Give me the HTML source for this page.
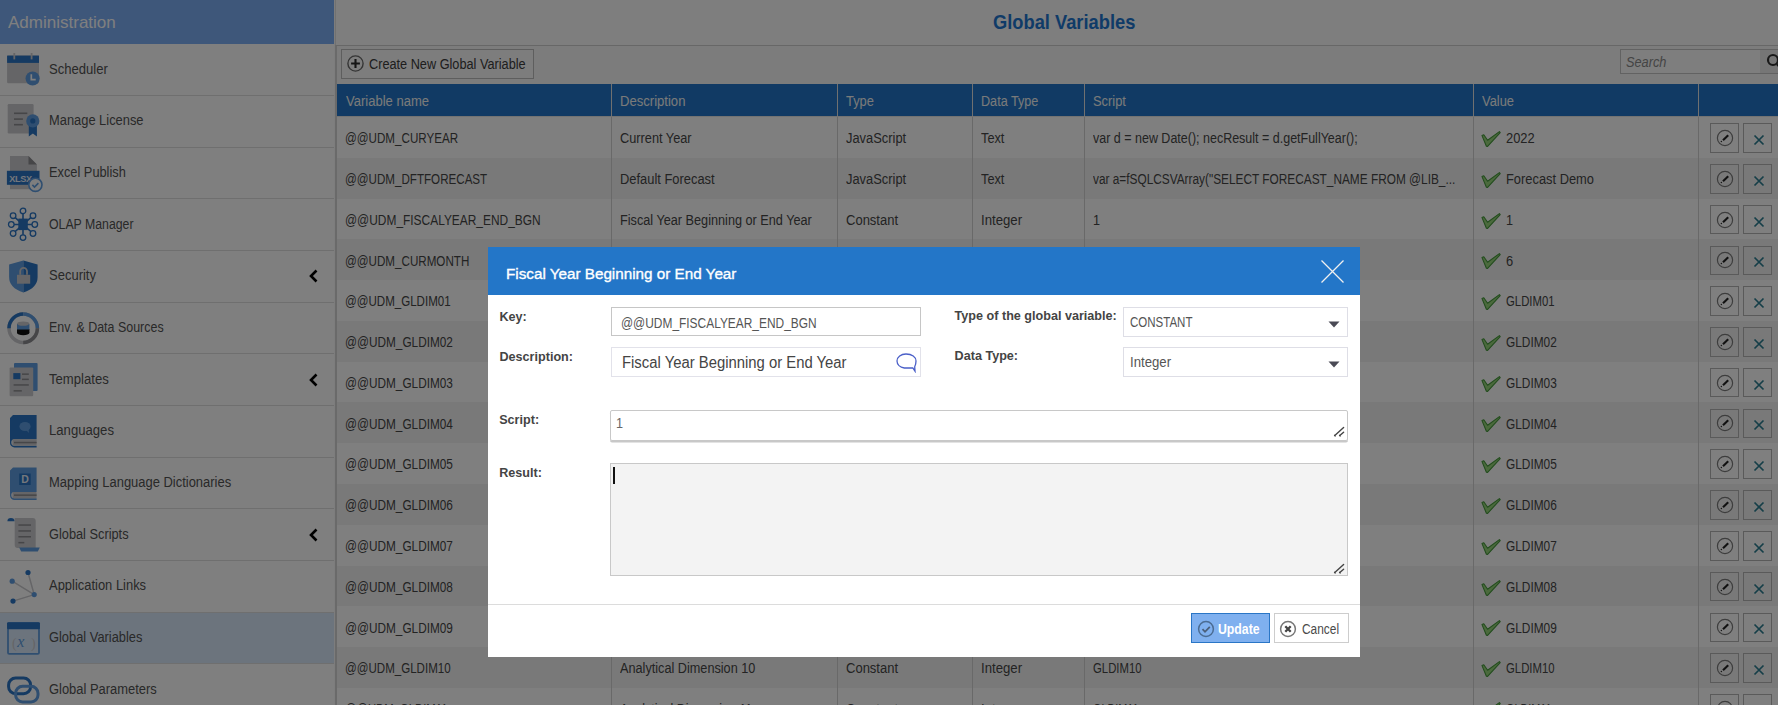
<!DOCTYPE html><html><head><meta charset="utf-8"><title>Global Variables</title><style>
*{box-sizing:border-box;margin:0;padding:0}
html,body{width:1778px;height:705px;overflow:hidden;background:#fafafa;font-family:"Liberation Sans",sans-serif;color:#333}
.abs{position:absolute}
.t{position:absolute;white-space:nowrap;line-height:1;transform-origin:0 0}
.c{transform:scaleX(0.89)}

</style></head><body>
<div class="abs" style="left:0;top:0;width:334px;height:705px;background:#ffffff"></div>
<div class="abs" style="left:0;top:0;width:334px;height:44px;background:#7caef4"></div>
<div class="t" style="left:7.50px;top:14.93px;font-size:16.60px;color:#fff;font-weight:normal;transform:scaleX(1.025);">Administration</div>
<div class="abs" style="left:0;top:44.40px;width:334px;height:51.67px;background:transparent;border-bottom:1px solid #dedede"></div>
<div class="t" style="left:49.00px;top:61.57px;font-size:14.00px;color:#525252;font-weight:normal;transform:scaleX(0.934);">Scheduler</div>
<div class="abs" style="left:0;top:96.07px;width:334px;height:51.67px;background:transparent;border-bottom:1px solid #dedede"></div>
<div class="t" style="left:49.00px;top:113.24px;font-size:14.00px;color:#525252;font-weight:normal;transform:scaleX(0.920);">Manage License</div>
<div class="abs" style="left:0;top:147.74px;width:334px;height:51.67px;background:transparent;border-bottom:1px solid #dedede"></div>
<div class="t" style="left:49.00px;top:164.91px;font-size:14.00px;color:#525252;font-weight:normal;transform:scaleX(0.914);">Excel Publish</div>
<div class="abs" style="left:0;top:199.41px;width:334px;height:51.67px;background:transparent;border-bottom:1px solid #dedede"></div>
<div class="t" style="left:49.00px;top:216.58px;font-size:14.00px;color:#525252;font-weight:normal;transform:scaleX(0.878);">OLAP Manager</div>
<div class="abs" style="left:0;top:251.08px;width:334px;height:51.67px;background:transparent;border-bottom:1px solid #dedede"></div>
<div class="t" style="left:49.00px;top:268.25px;font-size:14.00px;color:#525252;font-weight:normal;transform:scaleX(0.929);">Security</div>
<svg class="abs" style="left:308px;top:269.42px" width="11" height="14" viewBox="0 0 11 14"><path d="M8.5 1.5 L3 7 L8.5 12.5" fill="none" stroke="#000" stroke-width="2.6"/></svg>
<div class="abs" style="left:0;top:302.75px;width:334px;height:51.67px;background:transparent;border-bottom:1px solid #dedede"></div>
<div class="t" style="left:49.00px;top:319.92px;font-size:14.00px;color:#525252;font-weight:normal;transform:scaleX(0.889);">Env. &amp; Data Sources</div>
<div class="abs" style="left:0;top:354.42px;width:334px;height:51.67px;background:transparent;border-bottom:1px solid #dedede"></div>
<div class="t" style="left:49.00px;top:371.59px;font-size:14.00px;color:#525252;font-weight:normal;transform:scaleX(0.936);">Templates</div>
<svg class="abs" style="left:308px;top:372.75px" width="11" height="14" viewBox="0 0 11 14"><path d="M8.5 1.5 L3 7 L8.5 12.5" fill="none" stroke="#000" stroke-width="2.6"/></svg>
<div class="abs" style="left:0;top:406.09px;width:334px;height:51.67px;background:transparent;border-bottom:1px solid #dedede"></div>
<div class="t" style="left:49.00px;top:423.26px;font-size:14.00px;color:#525252;font-weight:normal;transform:scaleX(0.938);">Languages</div>
<div class="abs" style="left:0;top:457.76px;width:334px;height:51.67px;background:transparent;border-bottom:1px solid #dedede"></div>
<div class="t" style="left:49.00px;top:474.93px;font-size:14.00px;color:#525252;font-weight:normal;transform:scaleX(0.925);">Mapping Language Dictionaries</div>
<div class="abs" style="left:0;top:509.43px;width:334px;height:51.67px;background:transparent;border-bottom:1px solid #dedede"></div>
<div class="t" style="left:49.00px;top:526.60px;font-size:14.00px;color:#525252;font-weight:normal;transform:scaleX(0.913);">Global Scripts</div>
<svg class="abs" style="left:308px;top:527.76px" width="11" height="14" viewBox="0 0 11 14"><path d="M8.5 1.5 L3 7 L8.5 12.5" fill="none" stroke="#000" stroke-width="2.6"/></svg>
<div class="abs" style="left:0;top:561.10px;width:334px;height:51.67px;background:transparent;border-bottom:1px solid #dedede"></div>
<div class="t" style="left:49.00px;top:578.27px;font-size:14.00px;color:#525252;font-weight:normal;transform:scaleX(0.924);">Application Links</div>
<div class="abs" style="left:0;top:612.77px;width:334px;height:51.67px;background:#d9e9fb;border-bottom:1px solid #dedede"></div>
<div class="t" style="left:49.00px;top:629.94px;font-size:14.00px;color:#525252;font-weight:normal;transform:scaleX(0.919);">Global Variables</div>
<div class="abs" style="left:0;top:664.44px;width:334px;height:51.67px;background:transparent;border-bottom:1px solid #dedede"></div>
<div class="t" style="left:49.00px;top:681.61px;font-size:14.00px;color:#525252;font-weight:normal;transform:scaleX(0.923);">Global Parameters</div>
<svg class="abs" style="left:6px;top:53.40px;overflow:visible" width="36" height="36" viewBox="0 0 36 36"><rect x="1.1" y="2.6" width="31.9" height="27.6" rx="1.2" fill="#cacace"/><rect x="1.1" y="2.6" width="31.9" height="7.3" fill="#2a74c4"/><rect x="7.4" y="0" width="1.8" height="6.4" fill="#cacace"/><rect x="24.7" y="0" width="1.8" height="6.4" fill="#cacace"/><circle cx="26.6" cy="25.5" r="7.1" fill="#5f9de0"/><path d="M25.3 21.3v5.3h4.4" stroke="#fff" stroke-width="1.7" fill="none"/></svg>
<svg class="abs" style="left:6px;top:105.07px;overflow:visible" width="36" height="36" viewBox="0 0 36 36"><rect x="1.7" y="-1" width="25.9" height="29.5" rx="1.2" fill="#cacace"/><rect x="8" y="7.5" width="13.3" height="1.6" fill="#8c8c90"/><rect x="8" y="13.3" width="8.9" height="1.6" fill="#8c8c90"/><rect x="8" y="18.9" width="8.9" height="1.6" fill="#8c8c90"/><path d="M22.8 20v11.5l4.05-3 4.05 3V20z" fill="#2a74c4"/><circle cx="26.8" cy="15.9" r="6.6" fill="#5f9de0"/><circle cx="26.8" cy="15.9" r="2.6" fill="#2a74c4"/></svg>
<svg class="abs" style="left:6px;top:156.74px;overflow:visible" width="36" height="36" viewBox="0 0 36 36"><path d="M4 -1h18.5l8.4 8.4V32.3H4z" fill="#cacace"/><path d="M22.5 -1l8.4 8.4h-8.4z" fill="#8c8c90"/><rect x="0.9" y="13.8" width="32.6" height="14" fill="#2a74c4"/><text x="3.2" y="24.6" font-family="Liberation Sans" font-weight="bold" font-size="9.2" fill="#e8eef8" textLength="23">XLSX</text><circle cx="29.4" cy="27.8" r="6.6" fill="#fdfdfd" stroke="#5f9de0" stroke-width="1.6"/><path d="M26.4 27.9l2.1 2.1 3.9-3.9" stroke="#5f9de0" stroke-width="1.6" fill="none"/></svg>
<svg class="abs" style="left:6px;top:208.41px;overflow:visible" width="36" height="36" viewBox="0 0 36 36"><g stroke="#2a74c4" stroke-width="1.6" fill="none"><path d="M17 3v27M5 16.5h24M7 7.7l20 17.8M27 7.7L7 25.5"/></g><rect x="12.3" y="10.6" width="9.5" height="11.5" fill="#2a74c4"/><g fill="#fdfdfd" stroke="#2a74c4" stroke-width="1.3"><circle cx="17" cy="2.9" r="2.8"/><circle cx="17" cy="29.6" r="2.8"/><circle cx="5.3" cy="16.5" r="2.8"/><circle cx="28.8" cy="16.5" r="2.8"/><circle cx="7.1" cy="7.7" r="2.8"/><circle cx="27" cy="7.7" r="2.8"/><circle cx="7.1" cy="25.5" r="2.8"/><circle cx="27" cy="25.5" r="2.8"/></g></svg>
<svg class="abs" style="left:6px;top:260.08px;overflow:visible" width="36" height="36" viewBox="0 0 36 36"><path d="M3.1 4.5L17.35 0.6V32.5Q3.1 28 3.1 17z" fill="#5f9de0"/><path d="M17.35 0.6L31.6 4.5V17Q31.6 28 17.35 32.5z" fill="#2a74c4"/><rect x="11" y="14.8" width="13.2" height="8.9" fill="#cacace"/><path d="M14.2 14.8v-3.6a3.4 3.4 0 0 1 6.8 0v3.6" stroke="#cacace" stroke-width="1.8" fill="none"/></svg>
<svg class="abs" style="left:6px;top:311.75px;overflow:visible" width="36" height="36" viewBox="0 0 36 36"><circle cx="17.2" cy="16.3" r="14.2" fill="none" stroke="#cacace" stroke-width="3.5"/><path d="M3 16.3A14.2 14.2 0 0 1 17.2 2.1" fill="none" stroke="#2a74c4" stroke-width="3.5"/><path d="M17.2 2.1A14.2 14.2 0 0 1 31.4 16.3" fill="none" stroke="#5f9de0" stroke-width="3.5"/><path d="M31.4 16.3A14.2 14.2 0 0 1 17.2 30.5" fill="none" stroke="#8c8c90" stroke-width="3.5"/><ellipse cx="17.2" cy="21" rx="6.2" ry="2.2" fill="#111"/><rect x="11" y="17" width="12.4" height="4" fill="#111"/><rect x="11" y="12" width="12.4" height="5.5" fill="#5f9de0"/><ellipse cx="17.2" cy="11.6" rx="6.2" ry="2.2" fill="#cacace"/></svg>
<svg class="abs" style="left:6px;top:363.42px;overflow:visible" width="36" height="36" viewBox="0 0 36 36"><rect x="8" y="0" width="23.6" height="28" rx="1" fill="#5f9de0"/><rect x="3.6" y="4.4" width="23.6" height="28.8" rx="1" fill="#cacace"/><rect x="7.3" y="10.1" width="7.1" height="6.1" fill="#2a74c4"/><g fill="#8c8c90"><rect x="16" y="10.4" width="6.8" height="1.5"/><rect x="16" y="15.6" width="6.8" height="1.5"/><rect x="7.6" y="21.2" width="15.2" height="1.5"/><rect x="7.6" y="27.1" width="8.2" height="1.5"/></g></svg>
<svg class="abs" style="left:6px;top:415.09px;overflow:visible" width="36" height="36" viewBox="0 0 36 36"><path d="M7 0h23.6v24.3H8.5a3.2 3.2 0 0 0 0 6.4h22.1v1.7H8.5A4.5 4.5 0 0 1 4 28V3z" fill="#2a74c4"/><rect x="6.5" y="24.3" width="24.1" height="6.4" rx="1" fill="#cacace"/><rect x="8" y="26.8" width="22.6" height="1.5" fill="#8c8c90"/><ellipse cx="19" cy="11.5" rx="5.6" ry="4.6" fill="#5f9de0"/><path d="M20 15l3 3-0.5-4z" fill="#5f9de0"/></svg>
<svg class="abs" style="left:6px;top:466.76px;overflow:visible" width="36" height="36" viewBox="0 0 36 36"><path d="M7 0.6h23.6v24.3H8.5a3.2 3.2 0 0 0 0 6.4h22.1v1.7H8.5A4.5 4.5 0 0 1 4 28.6V3.6z" fill="#5f9de0"/><rect x="6.5" y="24.9" width="24.1" height="6.4" rx="1" fill="#cacace"/><rect x="8" y="27.4" width="22.6" height="1.5" fill="#8c8c90"/><rect x="13.2" y="6.5" width="11.5" height="11.5" fill="#2a74c4"/><text x="15.3" y="16.2" font-family="Liberation Sans" font-weight="bold" font-size="10.5" fill="#e8eef8">D</text></svg>
<svg class="abs" style="left:6px;top:518.43px;overflow:visible" width="36" height="36" viewBox="0 0 36 36"><path d="M8.7 0h18a3 3 0 0 1 3 3V30H11.7a3 3 0 0 1-3-3z" fill="#cacace"/><path d="M1.4 3.2a3.55 3.2 0 0 1 7.1 0z" fill="#2a74c4"/><path d="M13.2 29.4h20.6l-2 4H15.2z" fill="#5f9de0"/><g fill="#8c8c90"><rect x="12.4" y="6.3" width="12.6" height="1.5"/><rect x="12.4" y="12.2" width="12.6" height="1.5"/><rect x="12.4" y="18" width="12.6" height="1.5"/><rect x="12.4" y="23.9" width="5.9" height="1.5"/></g></svg>
<svg class="abs" style="left:6px;top:570.10px;overflow:visible" width="36" height="36" viewBox="0 0 36 36"><g stroke="#cacace" stroke-width="1.5"><path d="M28.2 24.6L22 2.5M28.2 24.6L6.2 11.2M28.2 24.6L7 31.1"/></g><circle cx="22" cy="2.5" r="2.6" fill="#2a74c4"/><circle cx="6.2" cy="11.2" r="2.6" fill="#5f9de0"/><circle cx="28.2" cy="24.6" r="2.6" fill="#5f9de0"/><circle cx="7" cy="31.1" r="2.6" fill="#2a74c4"/></svg>
<svg class="abs" style="left:6px;top:621.77px;overflow:visible" width="36" height="36" viewBox="0 0 36 36"><rect x="2" y="1.1" width="31" height="30.8" rx="1.2" fill="none" stroke="#5f9de0" stroke-width="1.8"/><rect x="1.1" y="0.2" width="32.8" height="7" rx="1" fill="#2a74c4"/><text x="6" y="26" font-family="Liberation Serif" font-size="14" fill="#cacace">(</text><text x="11.2" y="25.2" font-family="Liberation Serif" font-style="italic" font-size="16" fill="#5f9de0">x</text><text x="25" y="26" font-family="Liberation Serif" font-size="14" fill="#cacace">)</text></svg>
<svg class="abs" style="left:6px;top:673.44px;overflow:visible" width="36" height="36" viewBox="0 0 36 36"><rect x="2.6" y="5.1" width="22" height="15.6" rx="7" fill="none" stroke="#2a74c4" stroke-width="3"/><rect x="9.6" y="13.3" width="22.4" height="15.6" rx="7" fill="none" stroke="#5f9de0" stroke-width="3"/></svg>
<div class="abs" style="left:335px;top:0;width:1px;height:45px;background:#e2e2e2"></div>
<div class="abs" style="left:335px;top:45px;width:2px;height:660px;background:#d4d4d4"></div>
<div class="abs" style="left:336px;top:0;width:1442px;height:46px;background:#fcfcfc;border-bottom:1px solid #cfcfcf"></div>
<div class="t" style="left:992.70px;top:11.26px;font-size:21.00px;color:#1f77d0;font-weight:bold;transform:scaleX(0.871);">Global Variables</div>
<div class="abs" style="left:337px;top:46px;width:1441px;height:38px;background:#f8f8f8"></div>
<div class="abs" style="left:341px;top:49px;width:193px;height:30px;background:#fafafa;border:1px solid #bdbdbd"></div>
<svg class="abs" style="left:347.4px;top:55.4px" width="18" height="18" viewBox="0 0 18 18"><circle cx="8.5" cy="8.5" r="7.6" fill="none" stroke="#6a6a6a" stroke-width="1.4"/><path d="M8.5 4.1v8.8M4.1 8.5h8.8" stroke="#2a2a2a" stroke-width="2.1"/></svg>
<div class="t" style="left:369.00px;top:57.17px;font-size:14.00px;color:#3c3c3c;font-weight:normal;transform:scaleX(0.908);">Create New Global Variable</div>
<div class="abs" style="left:1620px;top:49px;width:170px;height:25px;background:#fdfdfd;border:1px solid #c4c4c4"></div>
<div class="abs" style="left:1760px;top:50px;width:20px;height:23px;background:#ececec"></div>
<div class="t" style="left:1626.00px;top:55.27px;font-size:14.80px;color:#8a8a8a;font-weight:normal;transform:scaleX(0.862);font-style:italic">Search</div>
<svg class="abs" style="left:1764px;top:53px" width="16" height="16" viewBox="0 0 16 16"><circle cx="9" cy="7" r="5" fill="none" stroke="#333" stroke-width="2.2"/><path d="M13 11l4 4" stroke="#333" stroke-width="2.5"/></svg>
<div class="abs" style="left:337px;top:84px;width:1441px;height:32px;background:#2274c8"></div>
<div class="abs" style="left:337px;top:116px;width:1441px;height:1px;background:#e6e6e6"></div>
<div class="t" style="left:345.50px;top:94.17px;font-size:14.00px;color:#f4f4f4;font-weight:normal;transform:scaleX(0.930);">Variable name</div>
<div class="t" style="left:619.50px;top:94.17px;font-size:14.00px;color:#f4f4f4;font-weight:normal;transform:scaleX(0.934);">Description</div>
<div class="t" style="left:845.50px;top:94.17px;font-size:14.00px;color:#f4f4f4;font-weight:normal;transform:scaleX(0.917);">Type</div>
<div class="t" style="left:980.50px;top:94.17px;font-size:14.00px;color:#f4f4f4;font-weight:normal;transform:scaleX(0.902);">Data Type</div>
<div class="t" style="left:1092.50px;top:94.17px;font-size:14.00px;color:#f4f4f4;font-weight:normal;transform:scaleX(0.919);">Script</div>
<div class="t" style="left:1481.50px;top:94.17px;font-size:14.00px;color:#f4f4f4;font-weight:normal;transform:scaleX(0.919);">Value</div>
<div class="abs" style="left:337px;top:117.00px;width:1441px;height:41.28px;background:#ffffff"></div>
<div class="t" style="left:344.80px;top:131.17px;font-size:14.00px;color:#464646;font-weight:normal;transform:scaleX(0.830);">@@UDM_CURYEAR</div>
<div class="t" style="left:620.20px;top:131.17px;font-size:14.00px;color:#464646;font-weight:normal;transform:scaleX(0.911);">Current Year</div>
<div class="t" style="left:846.20px;top:131.17px;font-size:14.00px;color:#464646;font-weight:normal;transform:scaleX(0.920);">JavaScript</div>
<div class="t" style="left:981.20px;top:131.17px;font-size:14.00px;color:#464646;font-weight:normal;transform:scaleX(0.912);">Text</div>
<div class="t" style="left:1093.20px;top:131.17px;font-size:14.00px;color:#464646;font-weight:normal;transform:scaleX(0.892);">var d = new Date(); necResult = d.getFullYear();</div>
<svg class="abs" style="left:1481px;top:131.00px" width="20" height="17" viewBox="0 0 20 17"><path d="M1 4.6 L2.8 3.8 L6.6 9.2 L18.4 0.6 L19.2 1.6 L6.6 15.4 L5.4 15.2 Z" fill="#96d47a" stroke="#46993c" stroke-width="1.1" stroke-linejoin="round"/></svg>
<div class="t" style="left:1506.00px;top:131.17px;font-size:14.00px;color:#464646;font-weight:normal;transform:scaleX(0.921);">2022</div>
<div class="abs" style="left:1710px;top:123.20px;width:29px;height:29.6px;border:1px solid #b4b4b4;background:transparent"></div>
<svg class="abs" style="left:1716px;top:129.00px" width="18" height="18" viewBox="0 0 18 18"><circle cx="9" cy="9" r="7.6" fill="none" stroke="#7a7a7a" stroke-width="1.2"/><path d="M7 11.2L12.2 6.2" stroke="#222" stroke-width="2.1"/><circle cx="5.4" cy="12.6" r="0.75" fill="#333"/></svg>
<div class="abs" style="left:1743px;top:123.20px;width:29px;height:29.6px;border:1px solid #b4b4b4"></div>
<svg class="abs" style="left:1753px;top:134.00px" width="12" height="12" viewBox="0 0 12 12"><path d="M1.5 1.5l9 9M10.5 1.5l-9 9" stroke="#2a7d90" stroke-width="1.7"/></svg>
<div class="abs" style="left:337px;top:157.78px;width:1441px;height:41.28px;background:#f3f3f3"></div>
<div class="t" style="left:344.80px;top:171.95px;font-size:14.00px;color:#464646;font-weight:normal;transform:scaleX(0.829);">@@UDM_DFTFORECAST</div>
<div class="t" style="left:620.20px;top:171.95px;font-size:14.00px;color:#464646;font-weight:normal;transform:scaleX(0.921);">Default Forecast</div>
<div class="t" style="left:846.20px;top:171.95px;font-size:14.00px;color:#464646;font-weight:normal;transform:scaleX(0.920);">JavaScript</div>
<div class="t" style="left:981.20px;top:171.95px;font-size:14.00px;color:#464646;font-weight:normal;transform:scaleX(0.912);">Text</div>
<div class="t" style="left:1093.20px;top:171.95px;font-size:14.00px;color:#464646;font-weight:normal;transform:scaleX(0.846);">var a=fSQLCSVArray("SELECT FORECAST_NAME FROM @LIB_...</div>
<svg class="abs" style="left:1481px;top:171.78px" width="20" height="17" viewBox="0 0 20 17"><path d="M1 4.6 L2.8 3.8 L6.6 9.2 L18.4 0.6 L19.2 1.6 L6.6 15.4 L5.4 15.2 Z" fill="#96d47a" stroke="#46993c" stroke-width="1.1" stroke-linejoin="round"/></svg>
<div class="t" style="left:1506.00px;top:171.95px;font-size:14.00px;color:#464646;font-weight:normal;transform:scaleX(0.919);">Forecast Demo</div>
<div class="abs" style="left:1710px;top:163.98px;width:29px;height:29.6px;border:1px solid #b4b4b4;background:transparent"></div>
<svg class="abs" style="left:1716px;top:169.78px" width="18" height="18" viewBox="0 0 18 18"><circle cx="9" cy="9" r="7.6" fill="none" stroke="#7a7a7a" stroke-width="1.2"/><path d="M7 11.2L12.2 6.2" stroke="#222" stroke-width="2.1"/><circle cx="5.4" cy="12.6" r="0.75" fill="#333"/></svg>
<div class="abs" style="left:1743px;top:163.98px;width:29px;height:29.6px;border:1px solid #b4b4b4"></div>
<svg class="abs" style="left:1753px;top:174.78px" width="12" height="12" viewBox="0 0 12 12"><path d="M1.5 1.5l9 9M10.5 1.5l-9 9" stroke="#2a7d90" stroke-width="1.7"/></svg>
<div class="abs" style="left:337px;top:198.56px;width:1441px;height:41.28px;background:#ffffff"></div>
<div class="t" style="left:344.80px;top:212.73px;font-size:14.00px;color:#464646;font-weight:normal;transform:scaleX(0.852);">@@UDM_FISCALYEAR_END_BGN</div>
<div class="t" style="left:620.20px;top:212.73px;font-size:14.00px;color:#464646;font-weight:normal;transform:scaleX(0.906);">Fiscal Year Beginning or End Year</div>
<div class="t" style="left:846.20px;top:212.73px;font-size:14.00px;color:#464646;font-weight:normal;transform:scaleX(0.929);">Constant</div>
<div class="t" style="left:981.20px;top:212.73px;font-size:14.00px;color:#464646;font-weight:normal;transform:scaleX(0.941);">Integer</div>
<div class="t" style="left:1093.20px;top:212.73px;font-size:14.00px;color:#464646;font-weight:normal;transform:scaleX(0.900);">1</div>
<svg class="abs" style="left:1481px;top:212.56px" width="20" height="17" viewBox="0 0 20 17"><path d="M1 4.6 L2.8 3.8 L6.6 9.2 L18.4 0.6 L19.2 1.6 L6.6 15.4 L5.4 15.2 Z" fill="#96d47a" stroke="#46993c" stroke-width="1.1" stroke-linejoin="round"/></svg>
<div class="t" style="left:1506.00px;top:212.73px;font-size:14.00px;color:#464646;font-weight:normal;transform:scaleX(0.900);">1</div>
<div class="abs" style="left:1710px;top:204.76px;width:29px;height:29.6px;border:1px solid #b4b4b4;background:transparent"></div>
<svg class="abs" style="left:1716px;top:210.56px" width="18" height="18" viewBox="0 0 18 18"><circle cx="9" cy="9" r="7.6" fill="none" stroke="#7a7a7a" stroke-width="1.2"/><path d="M7 11.2L12.2 6.2" stroke="#222" stroke-width="2.1"/><circle cx="5.4" cy="12.6" r="0.75" fill="#333"/></svg>
<div class="abs" style="left:1743px;top:204.76px;width:29px;height:29.6px;border:1px solid #b4b4b4"></div>
<svg class="abs" style="left:1753px;top:215.56px" width="12" height="12" viewBox="0 0 12 12"><path d="M1.5 1.5l9 9M10.5 1.5l-9 9" stroke="#2a7d90" stroke-width="1.7"/></svg>
<div class="abs" style="left:337px;top:239.34px;width:1441px;height:41.28px;background:#f3f3f3"></div>
<div class="t" style="left:344.80px;top:253.51px;font-size:14.00px;color:#464646;font-weight:normal;transform:scaleX(0.830);">@@UDM_CURMONTH</div>
<div class="t" style="left:620.20px;top:253.51px;font-size:14.00px;color:#464646;font-weight:normal;transform:scaleX(0.912);">Current Month</div>
<div class="t" style="left:846.20px;top:253.51px;font-size:14.00px;color:#464646;font-weight:normal;transform:scaleX(0.920);">JavaScript</div>
<div class="t" style="left:981.20px;top:253.51px;font-size:14.00px;color:#464646;font-weight:normal;transform:scaleX(0.941);">Integer</div>
<div class="t" style="left:1093.20px;top:253.51px;font-size:14.00px;color:#464646;font-weight:normal;transform:scaleX(0.882);">var d = new Date(); necResult = d.getMonth()+1;</div>
<svg class="abs" style="left:1481px;top:253.34px" width="20" height="17" viewBox="0 0 20 17"><path d="M1 4.6 L2.8 3.8 L6.6 9.2 L18.4 0.6 L19.2 1.6 L6.6 15.4 L5.4 15.2 Z" fill="#96d47a" stroke="#46993c" stroke-width="1.1" stroke-linejoin="round"/></svg>
<div class="t" style="left:1506.00px;top:253.51px;font-size:14.00px;color:#464646;font-weight:normal;transform:scaleX(0.921);">6</div>
<div class="abs" style="left:1710px;top:245.54px;width:29px;height:29.6px;border:1px solid #b4b4b4;background:transparent"></div>
<svg class="abs" style="left:1716px;top:251.34px" width="18" height="18" viewBox="0 0 18 18"><circle cx="9" cy="9" r="7.6" fill="none" stroke="#7a7a7a" stroke-width="1.2"/><path d="M7 11.2L12.2 6.2" stroke="#222" stroke-width="2.1"/><circle cx="5.4" cy="12.6" r="0.75" fill="#333"/></svg>
<div class="abs" style="left:1743px;top:245.54px;width:29px;height:29.6px;border:1px solid #b4b4b4"></div>
<svg class="abs" style="left:1753px;top:256.34px" width="12" height="12" viewBox="0 0 12 12"><path d="M1.5 1.5l9 9M10.5 1.5l-9 9" stroke="#2a7d90" stroke-width="1.7"/></svg>
<div class="abs" style="left:337px;top:280.12px;width:1441px;height:41.28px;background:#ffffff"></div>
<div class="t" style="left:344.80px;top:294.29px;font-size:14.00px;color:#464646;font-weight:normal;transform:scaleX(0.825);">@@UDM_GLDIM01</div>
<div class="t" style="left:620.20px;top:294.29px;font-size:14.00px;color:#464646;font-weight:normal;transform:scaleX(0.906);">Analytical Dimension 1</div>
<div class="t" style="left:846.20px;top:294.29px;font-size:14.00px;color:#464646;font-weight:normal;transform:scaleX(0.929);">Constant</div>
<div class="t" style="left:981.20px;top:294.29px;font-size:14.00px;color:#464646;font-weight:normal;transform:scaleX(0.941);">Integer</div>
<div class="t" style="left:1093.20px;top:294.29px;font-size:14.00px;color:#464646;font-weight:normal;transform:scaleX(0.810);">GLDIM01</div>
<svg class="abs" style="left:1481px;top:294.12px" width="20" height="17" viewBox="0 0 20 17"><path d="M1 4.6 L2.8 3.8 L6.6 9.2 L18.4 0.6 L19.2 1.6 L6.6 15.4 L5.4 15.2 Z" fill="#96d47a" stroke="#46993c" stroke-width="1.1" stroke-linejoin="round"/></svg>
<div class="t" style="left:1506.00px;top:294.29px;font-size:14.00px;color:#464646;font-weight:normal;transform:scaleX(0.810);">GLDIM01</div>
<div class="abs" style="left:1710px;top:286.32px;width:29px;height:29.6px;border:1px solid #b4b4b4;background:transparent"></div>
<svg class="abs" style="left:1716px;top:292.12px" width="18" height="18" viewBox="0 0 18 18"><circle cx="9" cy="9" r="7.6" fill="none" stroke="#7a7a7a" stroke-width="1.2"/><path d="M7 11.2L12.2 6.2" stroke="#222" stroke-width="2.1"/><circle cx="5.4" cy="12.6" r="0.75" fill="#333"/></svg>
<div class="abs" style="left:1743px;top:286.32px;width:29px;height:29.6px;border:1px solid #b4b4b4"></div>
<svg class="abs" style="left:1753px;top:297.12px" width="12" height="12" viewBox="0 0 12 12"><path d="M1.5 1.5l9 9M10.5 1.5l-9 9" stroke="#2a7d90" stroke-width="1.7"/></svg>
<div class="abs" style="left:337px;top:320.90px;width:1441px;height:41.28px;background:#f3f3f3"></div>
<div class="t" style="left:344.80px;top:335.07px;font-size:14.00px;color:#464646;font-weight:normal;transform:scaleX(0.843);">@@UDM_GLDIM02</div>
<div class="t" style="left:620.20px;top:335.07px;font-size:14.00px;color:#464646;font-weight:normal;transform:scaleX(0.922);">Analytical Dimension 2</div>
<div class="t" style="left:846.20px;top:335.07px;font-size:14.00px;color:#464646;font-weight:normal;transform:scaleX(0.929);">Constant</div>
<div class="t" style="left:981.20px;top:335.07px;font-size:14.00px;color:#464646;font-weight:normal;transform:scaleX(0.941);">Integer</div>
<div class="t" style="left:1093.20px;top:335.07px;font-size:14.00px;color:#464646;font-weight:normal;transform:scaleX(0.848);">GLDIM02</div>
<svg class="abs" style="left:1481px;top:334.90px" width="20" height="17" viewBox="0 0 20 17"><path d="M1 4.6 L2.8 3.8 L6.6 9.2 L18.4 0.6 L19.2 1.6 L6.6 15.4 L5.4 15.2 Z" fill="#96d47a" stroke="#46993c" stroke-width="1.1" stroke-linejoin="round"/></svg>
<div class="t" style="left:1506.00px;top:335.07px;font-size:14.00px;color:#464646;font-weight:normal;transform:scaleX(0.848);">GLDIM02</div>
<div class="abs" style="left:1710px;top:327.10px;width:29px;height:29.6px;border:1px solid #b4b4b4;background:transparent"></div>
<svg class="abs" style="left:1716px;top:332.90px" width="18" height="18" viewBox="0 0 18 18"><circle cx="9" cy="9" r="7.6" fill="none" stroke="#7a7a7a" stroke-width="1.2"/><path d="M7 11.2L12.2 6.2" stroke="#222" stroke-width="2.1"/><circle cx="5.4" cy="12.6" r="0.75" fill="#333"/></svg>
<div class="abs" style="left:1743px;top:327.10px;width:29px;height:29.6px;border:1px solid #b4b4b4"></div>
<svg class="abs" style="left:1753px;top:337.90px" width="12" height="12" viewBox="0 0 12 12"><path d="M1.5 1.5l9 9M10.5 1.5l-9 9" stroke="#2a7d90" stroke-width="1.7"/></svg>
<div class="abs" style="left:337px;top:361.68px;width:1441px;height:41.28px;background:#ffffff"></div>
<div class="t" style="left:344.80px;top:375.85px;font-size:14.00px;color:#464646;font-weight:normal;transform:scaleX(0.843);">@@UDM_GLDIM03</div>
<div class="t" style="left:620.20px;top:375.85px;font-size:14.00px;color:#464646;font-weight:normal;transform:scaleX(0.922);">Analytical Dimension 3</div>
<div class="t" style="left:846.20px;top:375.85px;font-size:14.00px;color:#464646;font-weight:normal;transform:scaleX(0.929);">Constant</div>
<div class="t" style="left:981.20px;top:375.85px;font-size:14.00px;color:#464646;font-weight:normal;transform:scaleX(0.941);">Integer</div>
<div class="t" style="left:1093.20px;top:375.85px;font-size:14.00px;color:#464646;font-weight:normal;transform:scaleX(0.848);">GLDIM03</div>
<svg class="abs" style="left:1481px;top:375.68px" width="20" height="17" viewBox="0 0 20 17"><path d="M1 4.6 L2.8 3.8 L6.6 9.2 L18.4 0.6 L19.2 1.6 L6.6 15.4 L5.4 15.2 Z" fill="#96d47a" stroke="#46993c" stroke-width="1.1" stroke-linejoin="round"/></svg>
<div class="t" style="left:1506.00px;top:375.85px;font-size:14.00px;color:#464646;font-weight:normal;transform:scaleX(0.848);">GLDIM03</div>
<div class="abs" style="left:1710px;top:367.88px;width:29px;height:29.6px;border:1px solid #b4b4b4;background:transparent"></div>
<svg class="abs" style="left:1716px;top:373.68px" width="18" height="18" viewBox="0 0 18 18"><circle cx="9" cy="9" r="7.6" fill="none" stroke="#7a7a7a" stroke-width="1.2"/><path d="M7 11.2L12.2 6.2" stroke="#222" stroke-width="2.1"/><circle cx="5.4" cy="12.6" r="0.75" fill="#333"/></svg>
<div class="abs" style="left:1743px;top:367.88px;width:29px;height:29.6px;border:1px solid #b4b4b4"></div>
<svg class="abs" style="left:1753px;top:378.68px" width="12" height="12" viewBox="0 0 12 12"><path d="M1.5 1.5l9 9M10.5 1.5l-9 9" stroke="#2a7d90" stroke-width="1.7"/></svg>
<div class="abs" style="left:337px;top:402.46px;width:1441px;height:41.28px;background:#f3f3f3"></div>
<div class="t" style="left:344.80px;top:416.63px;font-size:14.00px;color:#464646;font-weight:normal;transform:scaleX(0.843);">@@UDM_GLDIM04</div>
<div class="t" style="left:620.20px;top:416.63px;font-size:14.00px;color:#464646;font-weight:normal;transform:scaleX(0.922);">Analytical Dimension 4</div>
<div class="t" style="left:846.20px;top:416.63px;font-size:14.00px;color:#464646;font-weight:normal;transform:scaleX(0.929);">Constant</div>
<div class="t" style="left:981.20px;top:416.63px;font-size:14.00px;color:#464646;font-weight:normal;transform:scaleX(0.941);">Integer</div>
<div class="t" style="left:1093.20px;top:416.63px;font-size:14.00px;color:#464646;font-weight:normal;transform:scaleX(0.848);">GLDIM04</div>
<svg class="abs" style="left:1481px;top:416.46px" width="20" height="17" viewBox="0 0 20 17"><path d="M1 4.6 L2.8 3.8 L6.6 9.2 L18.4 0.6 L19.2 1.6 L6.6 15.4 L5.4 15.2 Z" fill="#96d47a" stroke="#46993c" stroke-width="1.1" stroke-linejoin="round"/></svg>
<div class="t" style="left:1506.00px;top:416.63px;font-size:14.00px;color:#464646;font-weight:normal;transform:scaleX(0.848);">GLDIM04</div>
<div class="abs" style="left:1710px;top:408.66px;width:29px;height:29.6px;border:1px solid #b4b4b4;background:transparent"></div>
<svg class="abs" style="left:1716px;top:414.46px" width="18" height="18" viewBox="0 0 18 18"><circle cx="9" cy="9" r="7.6" fill="none" stroke="#7a7a7a" stroke-width="1.2"/><path d="M7 11.2L12.2 6.2" stroke="#222" stroke-width="2.1"/><circle cx="5.4" cy="12.6" r="0.75" fill="#333"/></svg>
<div class="abs" style="left:1743px;top:408.66px;width:29px;height:29.6px;border:1px solid #b4b4b4"></div>
<svg class="abs" style="left:1753px;top:419.46px" width="12" height="12" viewBox="0 0 12 12"><path d="M1.5 1.5l9 9M10.5 1.5l-9 9" stroke="#2a7d90" stroke-width="1.7"/></svg>
<div class="abs" style="left:337px;top:443.24px;width:1441px;height:41.28px;background:#ffffff"></div>
<div class="t" style="left:344.80px;top:457.41px;font-size:14.00px;color:#464646;font-weight:normal;transform:scaleX(0.843);">@@UDM_GLDIM05</div>
<div class="t" style="left:620.20px;top:457.41px;font-size:14.00px;color:#464646;font-weight:normal;transform:scaleX(0.922);">Analytical Dimension 5</div>
<div class="t" style="left:846.20px;top:457.41px;font-size:14.00px;color:#464646;font-weight:normal;transform:scaleX(0.929);">Constant</div>
<div class="t" style="left:981.20px;top:457.41px;font-size:14.00px;color:#464646;font-weight:normal;transform:scaleX(0.941);">Integer</div>
<div class="t" style="left:1093.20px;top:457.41px;font-size:14.00px;color:#464646;font-weight:normal;transform:scaleX(0.848);">GLDIM05</div>
<svg class="abs" style="left:1481px;top:457.24px" width="20" height="17" viewBox="0 0 20 17"><path d="M1 4.6 L2.8 3.8 L6.6 9.2 L18.4 0.6 L19.2 1.6 L6.6 15.4 L5.4 15.2 Z" fill="#96d47a" stroke="#46993c" stroke-width="1.1" stroke-linejoin="round"/></svg>
<div class="t" style="left:1506.00px;top:457.41px;font-size:14.00px;color:#464646;font-weight:normal;transform:scaleX(0.848);">GLDIM05</div>
<div class="abs" style="left:1710px;top:449.44px;width:29px;height:29.6px;border:1px solid #b4b4b4;background:transparent"></div>
<svg class="abs" style="left:1716px;top:455.24px" width="18" height="18" viewBox="0 0 18 18"><circle cx="9" cy="9" r="7.6" fill="none" stroke="#7a7a7a" stroke-width="1.2"/><path d="M7 11.2L12.2 6.2" stroke="#222" stroke-width="2.1"/><circle cx="5.4" cy="12.6" r="0.75" fill="#333"/></svg>
<div class="abs" style="left:1743px;top:449.44px;width:29px;height:29.6px;border:1px solid #b4b4b4"></div>
<svg class="abs" style="left:1753px;top:460.24px" width="12" height="12" viewBox="0 0 12 12"><path d="M1.5 1.5l9 9M10.5 1.5l-9 9" stroke="#2a7d90" stroke-width="1.7"/></svg>
<div class="abs" style="left:337px;top:484.02px;width:1441px;height:41.28px;background:#f3f3f3"></div>
<div class="t" style="left:344.80px;top:498.19px;font-size:14.00px;color:#464646;font-weight:normal;transform:scaleX(0.843);">@@UDM_GLDIM06</div>
<div class="t" style="left:620.20px;top:498.19px;font-size:14.00px;color:#464646;font-weight:normal;transform:scaleX(0.922);">Analytical Dimension 6</div>
<div class="t" style="left:846.20px;top:498.19px;font-size:14.00px;color:#464646;font-weight:normal;transform:scaleX(0.929);">Constant</div>
<div class="t" style="left:981.20px;top:498.19px;font-size:14.00px;color:#464646;font-weight:normal;transform:scaleX(0.941);">Integer</div>
<div class="t" style="left:1093.20px;top:498.19px;font-size:14.00px;color:#464646;font-weight:normal;transform:scaleX(0.848);">GLDIM06</div>
<svg class="abs" style="left:1481px;top:498.02px" width="20" height="17" viewBox="0 0 20 17"><path d="M1 4.6 L2.8 3.8 L6.6 9.2 L18.4 0.6 L19.2 1.6 L6.6 15.4 L5.4 15.2 Z" fill="#96d47a" stroke="#46993c" stroke-width="1.1" stroke-linejoin="round"/></svg>
<div class="t" style="left:1506.00px;top:498.19px;font-size:14.00px;color:#464646;font-weight:normal;transform:scaleX(0.848);">GLDIM06</div>
<div class="abs" style="left:1710px;top:490.22px;width:29px;height:29.6px;border:1px solid #b4b4b4;background:transparent"></div>
<svg class="abs" style="left:1716px;top:496.02px" width="18" height="18" viewBox="0 0 18 18"><circle cx="9" cy="9" r="7.6" fill="none" stroke="#7a7a7a" stroke-width="1.2"/><path d="M7 11.2L12.2 6.2" stroke="#222" stroke-width="2.1"/><circle cx="5.4" cy="12.6" r="0.75" fill="#333"/></svg>
<div class="abs" style="left:1743px;top:490.22px;width:29px;height:29.6px;border:1px solid #b4b4b4"></div>
<svg class="abs" style="left:1753px;top:501.02px" width="12" height="12" viewBox="0 0 12 12"><path d="M1.5 1.5l9 9M10.5 1.5l-9 9" stroke="#2a7d90" stroke-width="1.7"/></svg>
<div class="abs" style="left:337px;top:524.80px;width:1441px;height:41.28px;background:#ffffff"></div>
<div class="t" style="left:344.80px;top:538.97px;font-size:14.00px;color:#464646;font-weight:normal;transform:scaleX(0.843);">@@UDM_GLDIM07</div>
<div class="t" style="left:620.20px;top:538.97px;font-size:14.00px;color:#464646;font-weight:normal;transform:scaleX(0.922);">Analytical Dimension 7</div>
<div class="t" style="left:846.20px;top:538.97px;font-size:14.00px;color:#464646;font-weight:normal;transform:scaleX(0.929);">Constant</div>
<div class="t" style="left:981.20px;top:538.97px;font-size:14.00px;color:#464646;font-weight:normal;transform:scaleX(0.941);">Integer</div>
<div class="t" style="left:1093.20px;top:538.97px;font-size:14.00px;color:#464646;font-weight:normal;transform:scaleX(0.848);">GLDIM07</div>
<svg class="abs" style="left:1481px;top:538.80px" width="20" height="17" viewBox="0 0 20 17"><path d="M1 4.6 L2.8 3.8 L6.6 9.2 L18.4 0.6 L19.2 1.6 L6.6 15.4 L5.4 15.2 Z" fill="#96d47a" stroke="#46993c" stroke-width="1.1" stroke-linejoin="round"/></svg>
<div class="t" style="left:1506.00px;top:538.97px;font-size:14.00px;color:#464646;font-weight:normal;transform:scaleX(0.848);">GLDIM07</div>
<div class="abs" style="left:1710px;top:531.00px;width:29px;height:29.6px;border:1px solid #b4b4b4;background:transparent"></div>
<svg class="abs" style="left:1716px;top:536.80px" width="18" height="18" viewBox="0 0 18 18"><circle cx="9" cy="9" r="7.6" fill="none" stroke="#7a7a7a" stroke-width="1.2"/><path d="M7 11.2L12.2 6.2" stroke="#222" stroke-width="2.1"/><circle cx="5.4" cy="12.6" r="0.75" fill="#333"/></svg>
<div class="abs" style="left:1743px;top:531.00px;width:29px;height:29.6px;border:1px solid #b4b4b4"></div>
<svg class="abs" style="left:1753px;top:541.80px" width="12" height="12" viewBox="0 0 12 12"><path d="M1.5 1.5l9 9M10.5 1.5l-9 9" stroke="#2a7d90" stroke-width="1.7"/></svg>
<div class="abs" style="left:337px;top:565.58px;width:1441px;height:41.28px;background:#f3f3f3"></div>
<div class="t" style="left:344.80px;top:579.75px;font-size:14.00px;color:#464646;font-weight:normal;transform:scaleX(0.843);">@@UDM_GLDIM08</div>
<div class="t" style="left:620.20px;top:579.75px;font-size:14.00px;color:#464646;font-weight:normal;transform:scaleX(0.922);">Analytical Dimension 8</div>
<div class="t" style="left:846.20px;top:579.75px;font-size:14.00px;color:#464646;font-weight:normal;transform:scaleX(0.929);">Constant</div>
<div class="t" style="left:981.20px;top:579.75px;font-size:14.00px;color:#464646;font-weight:normal;transform:scaleX(0.941);">Integer</div>
<div class="t" style="left:1093.20px;top:579.75px;font-size:14.00px;color:#464646;font-weight:normal;transform:scaleX(0.848);">GLDIM08</div>
<svg class="abs" style="left:1481px;top:579.58px" width="20" height="17" viewBox="0 0 20 17"><path d="M1 4.6 L2.8 3.8 L6.6 9.2 L18.4 0.6 L19.2 1.6 L6.6 15.4 L5.4 15.2 Z" fill="#96d47a" stroke="#46993c" stroke-width="1.1" stroke-linejoin="round"/></svg>
<div class="t" style="left:1506.00px;top:579.75px;font-size:14.00px;color:#464646;font-weight:normal;transform:scaleX(0.848);">GLDIM08</div>
<div class="abs" style="left:1710px;top:571.78px;width:29px;height:29.6px;border:1px solid #b4b4b4;background:transparent"></div>
<svg class="abs" style="left:1716px;top:577.58px" width="18" height="18" viewBox="0 0 18 18"><circle cx="9" cy="9" r="7.6" fill="none" stroke="#7a7a7a" stroke-width="1.2"/><path d="M7 11.2L12.2 6.2" stroke="#222" stroke-width="2.1"/><circle cx="5.4" cy="12.6" r="0.75" fill="#333"/></svg>
<div class="abs" style="left:1743px;top:571.78px;width:29px;height:29.6px;border:1px solid #b4b4b4"></div>
<svg class="abs" style="left:1753px;top:582.58px" width="12" height="12" viewBox="0 0 12 12"><path d="M1.5 1.5l9 9M10.5 1.5l-9 9" stroke="#2a7d90" stroke-width="1.7"/></svg>
<div class="abs" style="left:337px;top:606.36px;width:1441px;height:41.28px;background:#ffffff"></div>
<div class="t" style="left:344.80px;top:620.53px;font-size:14.00px;color:#464646;font-weight:normal;transform:scaleX(0.843);">@@UDM_GLDIM09</div>
<div class="t" style="left:620.20px;top:620.53px;font-size:14.00px;color:#464646;font-weight:normal;transform:scaleX(0.922);">Analytical Dimension 9</div>
<div class="t" style="left:846.20px;top:620.53px;font-size:14.00px;color:#464646;font-weight:normal;transform:scaleX(0.929);">Constant</div>
<div class="t" style="left:981.20px;top:620.53px;font-size:14.00px;color:#464646;font-weight:normal;transform:scaleX(0.941);">Integer</div>
<div class="t" style="left:1093.20px;top:620.53px;font-size:14.00px;color:#464646;font-weight:normal;transform:scaleX(0.848);">GLDIM09</div>
<svg class="abs" style="left:1481px;top:620.36px" width="20" height="17" viewBox="0 0 20 17"><path d="M1 4.6 L2.8 3.8 L6.6 9.2 L18.4 0.6 L19.2 1.6 L6.6 15.4 L5.4 15.2 Z" fill="#96d47a" stroke="#46993c" stroke-width="1.1" stroke-linejoin="round"/></svg>
<div class="t" style="left:1506.00px;top:620.53px;font-size:14.00px;color:#464646;font-weight:normal;transform:scaleX(0.848);">GLDIM09</div>
<div class="abs" style="left:1710px;top:612.56px;width:29px;height:29.6px;border:1px solid #b4b4b4;background:transparent"></div>
<svg class="abs" style="left:1716px;top:618.36px" width="18" height="18" viewBox="0 0 18 18"><circle cx="9" cy="9" r="7.6" fill="none" stroke="#7a7a7a" stroke-width="1.2"/><path d="M7 11.2L12.2 6.2" stroke="#222" stroke-width="2.1"/><circle cx="5.4" cy="12.6" r="0.75" fill="#333"/></svg>
<div class="abs" style="left:1743px;top:612.56px;width:29px;height:29.6px;border:1px solid #b4b4b4"></div>
<svg class="abs" style="left:1753px;top:623.36px" width="12" height="12" viewBox="0 0 12 12"><path d="M1.5 1.5l9 9M10.5 1.5l-9 9" stroke="#2a7d90" stroke-width="1.7"/></svg>
<div class="abs" style="left:337px;top:647.14px;width:1441px;height:41.28px;background:#f3f3f3"></div>
<div class="t" style="left:344.80px;top:661.31px;font-size:14.00px;color:#464646;font-weight:normal;transform:scaleX(0.825);">@@UDM_GLDIM10</div>
<div class="t" style="left:620.20px;top:661.31px;font-size:14.00px;color:#464646;font-weight:normal;transform:scaleX(0.906);">Analytical Dimension 10</div>
<div class="t" style="left:846.20px;top:661.31px;font-size:14.00px;color:#464646;font-weight:normal;transform:scaleX(0.929);">Constant</div>
<div class="t" style="left:981.20px;top:661.31px;font-size:14.00px;color:#464646;font-weight:normal;transform:scaleX(0.941);">Integer</div>
<div class="t" style="left:1093.20px;top:661.31px;font-size:14.00px;color:#464646;font-weight:normal;transform:scaleX(0.810);">GLDIM10</div>
<svg class="abs" style="left:1481px;top:661.14px" width="20" height="17" viewBox="0 0 20 17"><path d="M1 4.6 L2.8 3.8 L6.6 9.2 L18.4 0.6 L19.2 1.6 L6.6 15.4 L5.4 15.2 Z" fill="#96d47a" stroke="#46993c" stroke-width="1.1" stroke-linejoin="round"/></svg>
<div class="t" style="left:1506.00px;top:661.31px;font-size:14.00px;color:#464646;font-weight:normal;transform:scaleX(0.810);">GLDIM10</div>
<div class="abs" style="left:1710px;top:653.34px;width:29px;height:29.6px;border:1px solid #b4b4b4;background:transparent"></div>
<svg class="abs" style="left:1716px;top:659.14px" width="18" height="18" viewBox="0 0 18 18"><circle cx="9" cy="9" r="7.6" fill="none" stroke="#7a7a7a" stroke-width="1.2"/><path d="M7 11.2L12.2 6.2" stroke="#222" stroke-width="2.1"/><circle cx="5.4" cy="12.6" r="0.75" fill="#333"/></svg>
<div class="abs" style="left:1743px;top:653.34px;width:29px;height:29.6px;border:1px solid #b4b4b4"></div>
<svg class="abs" style="left:1753px;top:664.14px" width="12" height="12" viewBox="0 0 12 12"><path d="M1.5 1.5l9 9M10.5 1.5l-9 9" stroke="#2a7d90" stroke-width="1.7"/></svg>
<div class="abs" style="left:337px;top:687.92px;width:1441px;height:41.28px;background:#ffffff"></div>
<div class="t" style="left:344.80px;top:702.09px;font-size:14.00px;color:#464646;font-weight:normal;transform:scaleX(0.807);">@@UDM_GLDIM11</div>
<div class="t" style="left:620.20px;top:702.09px;font-size:14.00px;color:#464646;font-weight:normal;transform:scaleX(0.891);">Analytical Dimension 11</div>
<div class="t" style="left:846.20px;top:702.09px;font-size:14.00px;color:#464646;font-weight:normal;transform:scaleX(0.929);">Constant</div>
<div class="t" style="left:981.20px;top:702.09px;font-size:14.00px;color:#464646;font-weight:normal;transform:scaleX(0.941);">Integer</div>
<div class="t" style="left:1093.20px;top:702.09px;font-size:14.00px;color:#464646;font-weight:normal;transform:scaleX(0.772);">GLDIM11</div>
<svg class="abs" style="left:1481px;top:701.92px" width="20" height="17" viewBox="0 0 20 17"><path d="M1 4.6 L2.8 3.8 L6.6 9.2 L18.4 0.6 L19.2 1.6 L6.6 15.4 L5.4 15.2 Z" fill="#96d47a" stroke="#46993c" stroke-width="1.1" stroke-linejoin="round"/></svg>
<div class="t" style="left:1506.00px;top:702.09px;font-size:14.00px;color:#464646;font-weight:normal;transform:scaleX(0.772);">GLDIM11</div>
<div class="abs" style="left:1710px;top:694.12px;width:29px;height:29.6px;border:1px solid #b4b4b4;background:transparent"></div>
<svg class="abs" style="left:1716px;top:699.92px" width="18" height="18" viewBox="0 0 18 18"><circle cx="9" cy="9" r="7.6" fill="none" stroke="#7a7a7a" stroke-width="1.2"/><path d="M7 11.2L12.2 6.2" stroke="#222" stroke-width="2.1"/><circle cx="5.4" cy="12.6" r="0.75" fill="#333"/></svg>
<div class="abs" style="left:1743px;top:694.12px;width:29px;height:29.6px;border:1px solid #b4b4b4"></div>
<svg class="abs" style="left:1753px;top:704.92px" width="12" height="12" viewBox="0 0 12 12"><path d="M1.5 1.5l9 9M10.5 1.5l-9 9" stroke="#2a7d90" stroke-width="1.7"/></svg>
<div class="abs" style="left:611px;top:84px;width:1px;height:32px;background:#e0e0e0"></div>
<div class="abs" style="left:611px;top:117px;width:1px;height:600px;background:#d2d2d2"></div>
<div class="abs" style="left:837px;top:84px;width:1px;height:32px;background:#e0e0e0"></div>
<div class="abs" style="left:837px;top:117px;width:1px;height:600px;background:#d2d2d2"></div>
<div class="abs" style="left:972px;top:84px;width:1px;height:32px;background:#e0e0e0"></div>
<div class="abs" style="left:972px;top:117px;width:1px;height:600px;background:#d2d2d2"></div>
<div class="abs" style="left:1084px;top:84px;width:1px;height:32px;background:#e0e0e0"></div>
<div class="abs" style="left:1084px;top:117px;width:1px;height:600px;background:#d2d2d2"></div>
<div class="abs" style="left:1473px;top:84px;width:1px;height:32px;background:#e0e0e0"></div>
<div class="abs" style="left:1473px;top:117px;width:1px;height:600px;background:#d2d2d2"></div>
<div class="abs" style="left:1698px;top:84px;width:1px;height:32px;background:#e0e0e0"></div>
<div class="abs" style="left:1698px;top:117px;width:1px;height:600px;background:#d2d2d2"></div>
<div class="abs" style="left:0;top:0;width:1778px;height:705px;background:rgba(0,0,0,0.5)"></div>
<div class="abs" style="left:488px;top:247px;width:872px;height:410px;background:#fff"></div>
<div class="abs" style="left:488px;top:247px;width:872px;height:48.4px;background:#2376c8"></div>
<div class="t" style="left:506.00px;top:266.29px;font-size:15.40px;color:#fff;font-weight:normal;transform:scaleX(0.990);-webkit-text-stroke:0.35px #fff">Fiscal Year Beginning or End Year</div>
<svg class="abs" style="left:1319px;top:258px" width="27" height="27" viewBox="0 0 27 27"><path d="M2.5 2.5l22 22M24.5 2.5l-22 22" stroke="#f0f0f0" stroke-width="1.3"/></svg>
<div class="t" style="left:499.50px;top:310.56px;font-size:12.60px;color:#444;font-weight:bold;transform:scaleX(1.000);">Key:</div>
<div class="t" style="left:499.50px;top:350.56px;font-size:12.60px;color:#444;font-weight:bold;transform:scaleX(1.000);">Description:</div>
<div class="t" style="left:954.60px;top:310.16px;font-size:12.60px;color:#444;font-weight:bold;transform:scaleX(1.000);">Type of the global variable:</div>
<div class="t" style="left:954.60px;top:350.36px;font-size:12.60px;color:#444;font-weight:bold;transform:scaleX(1.000);">Data Type:</div>
<div class="t" style="left:499.20px;top:414.16px;font-size:12.60px;color:#444;font-weight:bold;transform:scaleX(1.000);">Script:</div>
<div class="t" style="left:499.20px;top:466.66px;font-size:12.60px;color:#444;font-weight:bold;transform:scaleX(1.000);">Result:</div>
<div class="abs" style="left:611px;top:307px;width:310px;height:29px;border:1px solid #c6c6c6"></div>
<div class="t" style="left:621.00px;top:315.77px;font-size:14.00px;color:#555;font-weight:normal;transform:scaleX(0.852);">@@UDM_FISCALYEAR_END_BGN</div>
<div class="abs" style="left:611px;top:347px;width:310px;height:30px;border:1px solid #e2e2ea"></div>
<div class="t" style="left:622.40px;top:354.71px;font-size:16.00px;color:#444;font-weight:normal;transform:scaleX(0.928);">Fiscal Year Beginning or End Year</div>
<svg class="abs" style="left:895px;top:352px" width="22" height="21" viewBox="0 0 22 21"><path d="M11 2C6 2 2 5 2 9c0 3.5 3 6.3 7.3 7h8.5l2.2 3.2-0.3-4.4C20.3 13.5 21 11.5 21 9c0-4-4-7-10-7z" fill="none" stroke="#4a5fc8" stroke-width="1.3"/></svg>
<div class="abs" style="left:1123px;top:307.0px;width:225px;height:29.6px;border:1px solid #dedee6"></div>
<div class="t" style="left:1129.50px;top:314.97px;font-size:14.00px;color:#555;font-weight:normal;transform:scaleX(0.822);">CONSTANT</div>
<svg class="abs" style="left:1328px;top:321.0px" width="12" height="7" viewBox="0 0 12 7"><path d="M0.5 0.5h11L6 6.5z" fill="#4a4a55"/></svg>
<div class="abs" style="left:1123px;top:347.2px;width:225px;height:29.6px;border:1px solid #dedee6"></div>
<div class="t" style="left:1129.50px;top:355.17px;font-size:14.00px;color:#555;font-weight:normal;transform:scaleX(0.941);">Integer</div>
<svg class="abs" style="left:1328px;top:361.2px" width="12" height="7" viewBox="0 0 12 7"><path d="M0.5 0.5h11L6 6.5z" fill="#4a4a55"/></svg>
<div class="abs" style="left:610px;top:410px;width:738px;height:30.5px;border:1px solid #c8c8c8;border-radius:2px;box-shadow:0 1.5px 0 #c8c8c8"></div>
<div class="t" style="left:615.70px;top:416.17px;font-size:14.00px;color:#666;font-weight:normal;transform:scaleX(0.900);">1</div>
<svg class="abs" style="left:1333px;top:425.8px" width="12" height="11" viewBox="0 0 12 11"><path d="M1.8 9.6L10.6 1.4M6.8 9.6L10.6 6.2" stroke="#444" stroke-width="1.4" stroke-linecap="round"/><path d="M1.2 8.9l1.3 1.6M6.2 8.9l1.3 1.6" stroke="#444" stroke-width="1.1"/></svg>
<div class="abs" style="left:610px;top:463px;width:738px;height:113px;background:#f3f3f3;border:1px solid #c8c8c8"></div>
<div class="abs" style="left:613px;top:467px;width:2px;height:17px;background:#111"></div>
<svg class="abs" style="left:1333px;top:562.8px" width="12" height="11" viewBox="0 0 12 11"><path d="M1.8 9.6L10.6 1.4M6.8 9.6L10.6 6.2" stroke="#444" stroke-width="1.4" stroke-linecap="round"/><path d="M1.2 8.9l1.3 1.6M6.2 8.9l1.3 1.6" stroke="#444" stroke-width="1.1"/></svg>
<div class="abs" style="left:488px;top:604px;width:872px;height:1px;background:#dcdcdc"></div>
<div class="abs" style="left:1191px;top:613px;width:79px;height:30px;background:#7fb0ef;border:1.5px solid #2a76c6"></div>
<svg class="abs" style="left:1197px;top:620px" width="18" height="18" viewBox="0 0 18 18"><circle cx="9" cy="9" r="7.4" fill="none" stroke="#4b6c93" stroke-width="1.5"/><path d="M5.5 9.2l2.5 2.6 4.8-5" fill="none" stroke="#4b5f7a" stroke-width="1.8"/></svg>
<div class="t" style="left:1217.80px;top:622.37px;font-size:14.00px;color:#fff;font-weight:bold;transform:scaleX(0.876);">Update</div>
<div class="abs" style="left:1274px;top:613px;width:75px;height:30px;background:#fff;border:1px solid #cdcdcd"></div>
<svg class="abs" style="left:1279px;top:620px" width="18" height="18" viewBox="0 0 18 18"><circle cx="9" cy="9" r="7.4" fill="none" stroke="#777" stroke-width="1.5"/><path d="M6.3 6.3l5.4 5.4M11.7 6.3l-5.4 5.4" stroke="#444" stroke-width="2.3"/></svg>
<div class="t" style="left:1301.50px;top:622.37px;font-size:14.00px;color:#4a4a4a;font-weight:normal;transform:scaleX(0.850);">Cancel</div>
</body></html>
